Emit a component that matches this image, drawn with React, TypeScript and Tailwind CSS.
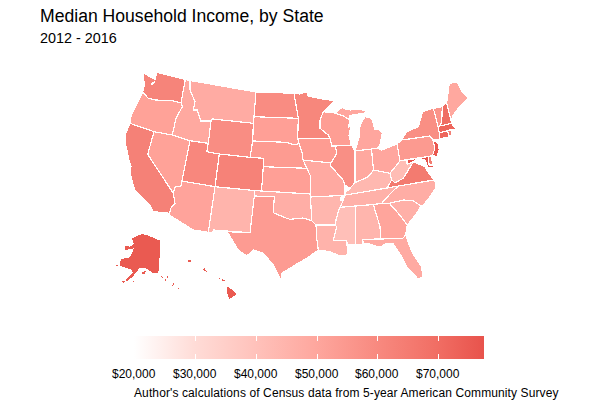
// Median household income choropleth, drawn in screen coordinates of the 600x400 plot.

const states: { name: string; fill: string; points: string }[] = [
  { name: 'WA', fill: '#F6847A', points: '144,73 150,77 155,79.5 157,72.5 185.3,79.5 181,102.7 171.7,100.7 155,100 148,98 142.7,92 144.5,85 143.5,78' },
  { name: 'OR', fill: '#FFA298', points: '142.7,92 148,98 155,100 171.7,100.7 181,102.7 182.3,106.7 176,118.3 172.3,135 154,131.7 130,123.3 131,116 135,108 139,100' },
  { name: 'CA', fill: '#F58177', points: '130,123.3 154,131.7 147.7,154.3 173.3,193.3 175,203.3 170.7,208.3 170,213.3 153.3,211.7 150,205 143.3,198.3 135,190 133,184 130,173 131,166 129,160 127,150 125,142 125,135' },
  { name: 'NV', fill: '#FFA298', points: '154,131.7 172.3,135 190,140.7 182,181 181,186 175,187 173.3,193.3 147.7,154.3' },
  { name: 'ID', fill: '#FFA9A0', points: '185.3,79.5 190,80.5 190,90 195,101.7 193.3,110 197.3,110 200.7,121 211,121 208.3,143.3 190,140.7 172.3,135 176,118.3 182.3,106.7 181,102.7' },
  { name: 'MT', fill: '#FFABA3', points: '190,80.5 256,92 254,116.7 253.3,123.3 212.7,119 211,121 200.7,121 197.3,110 193.3,110 195,101.7 190,90' },
  { name: 'WY', fill: '#F98D83', points: '212.7,119 253.3,123.3 252.7,141 250,157.3 219.3,154 206.7,151.7 208.3,143.3 211,121' },
  { name: 'UT', fill: '#F8877D', points: '190,140.7 208.3,143.3 206.7,151.7 219.3,154 215,186.7 182,181' },
  { name: 'CO', fill: '#F68278', points: '219.3,154 250,157.3 263.3,158.3 263.3,166.7 261.5,191 254.3,190.5 215,186.7' },
  { name: 'AZ', fill: '#FFA39B', points: '182,181 215,186.7 208.3,232.3 193.3,230 169.3,215 170.7,208.3 175,203.3 173.3,193.3 175,187 181,186' },
  { name: 'NM', fill: '#FFB4AC', points: '215,186.7 254.3,190.5 254.3,196 250,232.7 213.3,230 213,232.3 208.3,232.3' },
  { name: 'ND', fill: '#F98C82', points: '256,92 294,93.3 296,105 298.3,118.3 254,116.7' },
  { name: 'SD', fill: '#FF9F96', points: '254,116.7 298.3,118.3 297.7,136 297.7,138.3 299,143.3 295,145 285.7,142.3 252.7,141 253.3,123.3' },
  { name: 'NE', fill: '#FD9B91', points: '252.7,141 285.7,142.3 295,145 299,143.3 302,152 303,160 307,168.3 263.3,166.7 263.3,158.3 250,157.3' },
  { name: 'KS', fill: '#FF9F96', points: '263.3,166.7 307,168.3 310.7,176.7 310.3,194 261.5,191' },
  { name: 'OK', fill: '#FFAEA6', points: '254.3,190.5 261.5,191 310.3,194 310.5,197 311.7,220.7 303,218 290,219.3 286.7,218.3 273.3,212.7 274.3,196.7 254.3,196' },
  { name: 'TX', fill: '#FD9B92', points: '254.3,196 274.3,196.7 273.3,212.7 286.7,218.3 290,219.3 303,218 311.7,220.7 316,225 316.7,238.3 318.3,250 306.7,258.3 295,265 290,268.3 282,273 281,279 290,284 280,278.3 273.3,265 263.3,253.3 253.3,250 246.7,256 238.3,250 227.3,231.7 250,232.7' },
  { name: 'MN', fill: '#F7877C', points: '294,93.3 300,94 306.7,91.7 308.3,96 318.3,98.3 335,100.7 323.3,111.7 320,120 320,128.3 328.3,135 330,138.3 297.7,138.3 298.3,118.3 296,105' },
  { name: 'IA', fill: '#FE9C92', points: '297.7,138.3 330,138.3 331.7,146 335,146 337,153 331,163 303,160 302,152 299,143.3' },
  { name: 'MO', fill: '#FFA9A1', points: '303,160 331,163 330,165 343,180 345,185 345,195 341.7,195.5 310.5,197 310.3,194 310.7,176.7 307,168.3' },
  { name: 'AR', fill: '#FFB6AE', points: '310.5,197 341.7,195.5 340,200 343,201 340,207.3 338.3,211.7 336,220 335,225 316,225 311.7,220.7' },
  { name: 'LA', fill: '#FFB3AB', points: '316,225 335,225 336.7,226.7 333.3,240.7 346.7,240.7 347.3,248 348,252 346.7,255 340,256 330,251.7 318.3,250 316.7,238.3' },
  { name: 'WI', fill: '#FE9E94', points: '323.3,111.7 335,113 343.3,116 350,120 348.3,127 351,125 349,136 351.5,145 335,146 331.7,146 330,138.3 328.3,135 320,128.3 320,120' },
  { name: 'MI-U', fill: '#FFA69E', points: '335,113 345,105 343.3,108.5 350,110 356.7,109.3 368.3,110.7 363.3,113.3 350,115.5 350,120 343.3,116' },
  { name: 'MI', fill: '#FFA69E', points: '360,125 365,116.7 371.7,118.3 375,130 378.3,129.3 382.3,133.3 380,145 377.3,148.3 371.5,149 355,151 359.3,136.7' },
  { name: 'IL', fill: '#F98F85', points: '335,146 351.5,145 354.3,150 355,151 355,182.7 350,188.3 345,185 343,180 330,165 331,163 337,153' },
  { name: 'IN', fill: '#FFA89F', points: '355,151 371.5,149 373.5,170 368.3,176.7 355,182.7' },
  { name: 'OH', fill: '#FFA69E', points: '371.5,149 377.3,148.3 381.7,150 397,144 400,160.7 396.7,165 390,173.3 381.7,171.7 373.5,170' },
  { name: 'KY', fill: '#FFB8B0', points: '345,195 345,193 350,188.3 355,182.7 368.3,176.7 373.5,170 381.7,171.7 390,173.3 391.7,180 387,188 353.3,193.7' },
  { name: 'WV', fill: '#FFBDB5', points: '390,173.3 396.7,165 400,160.7 406,160 407.3,164.3 413.3,161.7 407.3,171.7 403.3,178.3 395,182.7 391.7,180' },
  { name: 'VA', fill: '#F37B70', points: '387,188 391.7,180 395,182.7 403.3,178.3 407.3,171.7 413.3,161.7 425,166.7 428,172 434,180 398.3,186' },
  { name: 'TN', fill: '#FFB1A9', points: '345,195 353.3,193.7 387,188 398.3,186 390,194 381.7,203.3 373.3,204.5 355.5,206 340,207.3 343,201' },
  { name: 'NC', fill: '#FFADA5', points: '398.3,186 434,180 436,184 435.7,188.3 430,196.7 423.3,205 420.7,206 413.3,200.7 403.3,200 389.3,203.3 381.7,203.3 390,194' },
  { name: 'SC', fill: '#FFB0A8', points: '389.3,203.3 403.3,200 413.3,200.7 420.7,206 416.7,213.3 407.3,225 398.3,213.3' },
  { name: 'GA', fill: '#FFA59C', points: '373.3,204.5 381.7,203.3 389.3,203.3 398.3,213.3 407.3,225 405.7,235 402.7,238.3 380.7,239 380,226.7' },
  { name: 'AL', fill: '#FFB5AD', points: '355.5,206 373.3,204.5 380,226.7 380.7,239 362.7,239.3 363.3,244 355.7,245' },
  { name: 'MS', fill: '#FFBFB8', points: '340,207.3 355.5,206 355.7,245 347.3,245 346.7,240.7 333.3,240.7 336.7,226.7 335,225 336,220 338.3,211.7' },
  { name: 'FL', fill: '#FFAAA2', points: '362.7,239.3 380.7,239 402.7,238.3 405.7,235 411.7,251.7 421.7,266.7 422.7,276.7 418.3,279.3 406.7,266.7 401.7,256.7 393.3,244 385,244 380,247.3 370,244 363.3,244' },
  { name: 'PA', fill: '#FC9A90', points: '397,144 401.7,140 430,136 433,140 435,148 432.7,155 431,156 400,160.7' },
  { name: 'NY', fill: '#F98F84', points: '401.7,140 406.7,131.7 418.3,126.7 422.7,111.7 433.3,108.3 438,126.5 439.3,132.7 440,139 433,140 430,136' },
  { name: 'VT', fill: '#FB948A', points: '433.3,108.3 442.3,106.7 441.7,121.7 440,126 438,126.5' },
  { name: 'NH', fill: '#EF6E64', points: '442.3,106.7 443.3,105 446.7,103 451.7,123.3 440,126 441.7,121.7' },
  { name: 'ME', fill: '#FFA89F', points: '446.7,103 449.3,83.3 457.3,82.3 462,92 468.3,98.3 460,106 453.3,115 451.2,121' },
  { name: 'MA', fill: '#EE665C', points: '438,126.5 440,126 451.7,123.3 455,128 456.7,130 450,130 439.3,132.7' },
  { name: 'CT', fill: '#EE665C', points: '439.3,132.7 447.3,130.7 449.3,136.7 440,139' },
  { name: 'RI', fill: '#F38076', points: '447.3,130.7 451.7,130 451.7,135 449.3,136.7' },
  { name: 'NJ', fill: '#EA5850', points: '433,140 438.3,143.3 439.3,150 436.7,157.3 432.7,155 435,148' },
  { name: 'DE', fill: '#F27C70', points: '428.5,156.5 431,156 433,165 429,165' },
  { name: 'MD', fill: '#E8534C', points: '407,160 428.5,156.5 429,165 433,165 434,168 428,168 425,160 418,158 413.3,161.7 407.3,164.3' },
]

const alaskaHawaii = [
  '131.7,238.3 141.7,234 146.7,235 160,240.7 160,251.7 158.3,273.3 153.3,273.3 146,268.3 139.3,268.3 133.3,276 126.7,281.7 125.5,280 133,273 132,270 120,266 120.7,259.3 130,257.3 134,248.3 125,250 125,246 130,246.7 134,244',
  '227.3,286.7 231.7,289.3 236.7,294.3 229.3,299 226.7,291.7',
  '221.7,279 225,280 225,281.5 221.7,281',
  '219,278 220,278 220,279 219,279',
  '203,269.5 205,268 206,271 207,272 204,271',
  '188,260 191,260 191,262 188,262',
  '122,281.5 125,281 123,283',
  '142,272 146,271 145,274 142,274',
  '161,276 163,277 162,278',
  '167,276 168,276 168,277.5 167,277.5',
  '165,279 166,279 166,280.5 165,280.5',
  '173,283 174,283 174,284.5 173,284.5',
  '172,285 173,285 173,286 172,286',
  '178,288 179,288 179,289 178,289',
  '116,265 117.5,265 117.5,266 116,266',
  '132.5,280.5 134,280.5 134,281.5 132.5,281.5',
]

const ticks = [
  { label: '$20,000', width: 'w-[61px]' },
  { label: '$30,000', width: 'w-[61px]' },
  { label: '$40,000', width: 'w-[61px]' },
  { label: '$50,000', width: 'w-[60px]' },
  { label: '$60,000', width: 'w-[61px]' },
  { label: '$70,000', width: 'w-[46px]' },
]

function UsMap() {
  return (
    <svg width="600" height="250" viewBox="0 60 600 250" className="block" shapeRendering="crispEdges">
      {states.map((s) => (
        <polygon key={s.name} points={s.points} fill={s.fill} stroke="#ffffff" strokeWidth="1.2" strokeLinejoin="round" />
      ))}
      {/* Puget Sound */}
      <polygon points="150.5,84 154.5,81 155,83 152,85.5" fill="#ffffff" />
      {alaskaHawaii.map((p) => (
        <polygon key={p} points={p} fill="#EA5A51" />
      ))}
    </svg>
  )
}

function ColorBar() {
  return (
    <div className="ml-[104px]">
      <div className="ml-[30px] flex h-[23px] w-[350px] bg-[linear-gradient(to_right,#ffffff_0%,#ffdcd7_17.3%,#ffc2bb_34.6%,#fea79e_51.9%,#f88a80_69.2%,#f16e64_86.5%,#e8534c_100%)]">
        {ticks.map((t, i) => (
          <div key={t.label} className={`${t.width} flex h-full flex-col justify-between`}>
            <div className={`h-[5px] w-px ${i === 0 ? '' : 'bg-white'}`} />
            <div className={`h-[5px] w-px ${i === 0 ? '' : 'bg-white'}`} />
          </div>
        ))}
      </div>
      <div className="mt-[8px] flex text-[12px] leading-[14px] text-black">
        {ticks.map((t) => (
          <div key={t.label} className={`${t.width} whitespace-nowrap pl-[8px]`}>
            {t.label}
          </div>
        ))}
      </div>
    </div>
  )
}

export default function App() {
  return (
    <div className="h-[400px] w-[600px] overflow-hidden bg-white font-['Liberation_Sans',Arial,sans-serif] text-black">
      <div className="pl-10 pt-[5px]">
        <h1 className="text-[17.6px] leading-[22px]">Median Household Income, by State</h1>
        <p className="mt-[1px] text-[14.4px] leading-[20px]">2012 - 2016</p>
      </div>
      <div className="mt-[12px]">
        <UsMap />
      </div>
      <div className="mt-[26px]">
        <ColorBar />
      </div>
      <p className="mt-[4px] whitespace-nowrap pl-[134px] text-[12px] leading-[16px] tracking-[0.11px]">
        Author's calculations of Census data from 5-year American Community Survey
      </p>
    </div>
  )
}
